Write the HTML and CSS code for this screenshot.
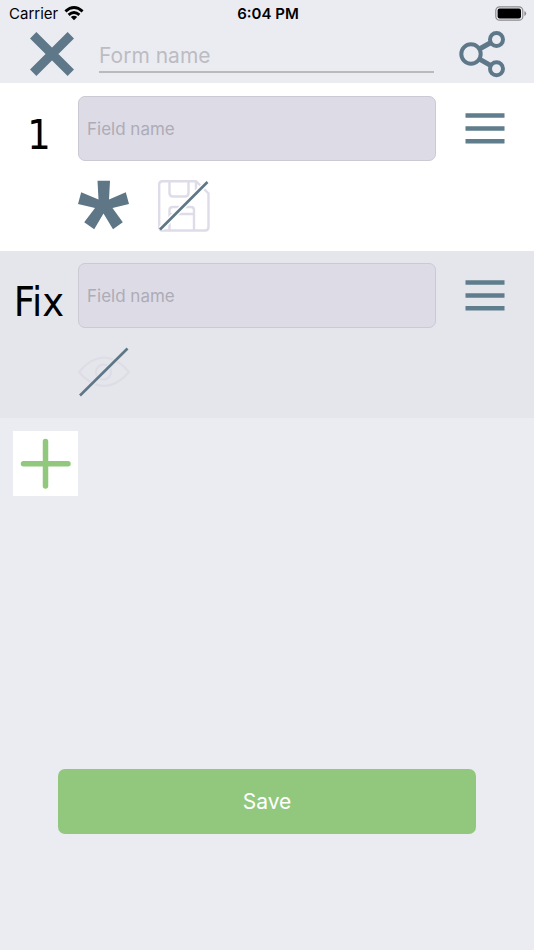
FILE: index.html
```html
<!DOCTYPE html>
<html lang="en">
<head>
<meta charset="utf-8">
<meta name="viewport" content="width=device-width, initial-scale=1">
<title>Form editor</title>
<link rel="stylesheet" href="styles.css">
</head>
<body>
<div class="status">
  <div class="carrier">
    <span>Carrier</span>
    <svg width="20" height="15" viewBox="0 0 20 15" fill="none" stroke="#000" stroke-width="2.8">
      <path d="M1.4 5.4Q10 -2.4 18.6 5.4"/>
      <path d="M4.6 8.9Q10 4 15.4 8.9"/>
      <path d="M10 14.2L6.8 11.1Q10 8.4 13.2 11.1Z" fill="#000" stroke="none"/>
    </svg>
  </div>
  <div class="time">6:04 PM</div>
  <svg class="battery" width="32" height="15" viewBox="0 0 32 15">
    <rect x=".8" y=".8" width="27" height="13.4" rx="3.8" fill="none" stroke="#8b8b8f" stroke-width="1.2"/>
    <rect x="2.6" y="2.6" width="23.4" height="9.8" rx="2" fill="#000"/>
    <path d="M29.4 5Q31.2 5.8 31.2 7.5T29.4 10Z" fill="#8b8b8f"/>
  </svg>
</div>
<header class="header">
  <button class="icon-button close" type="button" aria-label="Close">
    <svg width="44" height="44" viewBox="0 0 44 44" stroke="#5f7889" stroke-width="9"><path d="M3.2 3.2L40.8 40.8M40.8 3.2L3.2 40.8"/></svg>
  </button>
  <input class="form-name" type="text" placeholder="Form name" aria-label="Form name">
  <button class="icon-button share" type="button" aria-label="Share">
    <svg width="48" height="48" viewBox="0 0 48 48" fill="none" stroke="#5f7889" stroke-width="4">
      <path d="M21 19.2L32.5 12.8M21 28.8L32.5 35.4" stroke-width="5"/>
      <circle cx="13" cy="24" r="9.7"/><circle cx="38.5" cy="9.5" r="6.5"/><circle cx="38.5" cy="38.8" r="6.5"/>
    </svg>
  </button>
</header>
<main class="main">
  <section class="field">
    <label class="tag" for="field-1">1</label>
    <input class="field-name" id="field-1" type="text" placeholder="Field name">
    <button class="icon-button menu" type="button" aria-label="Reorder field 1">
      <svg width="40" height="32" viewBox="0 0 40 32" stroke="#5f7d8c" stroke-width="4.4"><path d="M.5 2.5H39.5M.5 15.5H39.5M.5 28.3H39.5"/></svg>
    </button>
    <div class="tools">
      <button class="icon-button" type="button" aria-label="Required">
        <svg width="52" height="52" viewBox="0 0 52 52" fill="#5f7687"><path d="M19.5 .8H32L31 19.5L47.8 12.3L51 24L34.5 28L44.8 42.2L35 49.3L25.500 33.5L16.2 49.3L6.2 42.2L17 28L0 24L3.2 12.3L20.500 19.5Z"/></svg>
      </button>
      <button class="icon-button" type="button" aria-label="Do not save value">
        <svg width="52" height="52" viewBox="0 0 52 52" fill="none" stroke="#dedce8" stroke-width="2.4">
          <path d="M4.5 1.2H38L50.5 13.5V47Q50.5 50.5 47 50.5H4.5Q1.2 50.5 1.2 47V4.5Q1.2 1.2 4.5 1.2Z"/>
          <path d="M11.5 1.5V13Q11.5 16.500 15 16.5H27Q30.5 16.5 30.5 13V1.5M38 1.5V14"/>
          <path d="M11.5 50V30Q11.5 27 15 27H33Q36 27 36 30V50M11.5 37Q11.5 34 15 34H36"/>
          <path d="M3 48.500L48.500 3" stroke="#fff" stroke-width="6"/>
          <path d="M2 49.5L49.5 2" stroke="#5f7687" stroke-width="2.6"/>
        </svg>
      </button>
    </div>
  </section>
  <section class="field fixed">
    <label class="tag" for="field-2">Fix</label>
    <input class="field-name" id="field-2" type="text" placeholder="Field name">
    <button class="icon-button menu" type="button" aria-label="Reorder fixed field">
      <svg width="40" height="32" viewBox="0 0 40 32" stroke="#5f7d8c" stroke-width="4.4"><path d="M.5 2.5H39.5M.5 15.5H39.5M.5 28.3H39.5"/></svg>
    </button>
    <div class="tools">
      <button class="icon-button" type="button" aria-label="Hidden">
        <svg width="52" height="52" viewBox="0 0 52 52" fill="none" stroke="#dedce6" stroke-width="2.2">
          <path d="M1 25Q13 10.5 26 10.5T51 25Q39 39 26 39T1 25Z"/>
          <circle cx="25.5" cy="25" r="7.5"/>
          <path d="M2 49L50 1" stroke="#e5e6ec" stroke-width="5"/>
          <path d="M2 48.5L49.5 1.5" stroke="#5f7687" stroke-width="2.6"/>
        </svg>
      </button>
    </div>
  </section>
  <button class="add" type="button" aria-label="Add field">
    <svg width="52" height="52" viewBox="0 0 52 52" stroke="#92c87d" stroke-width="5.5" stroke-linecap="round"><path d="M25.5 3.5V48M3.5 25.7H48"/></svg>
  </button>
  <button class="save" type="button">Save</button>
</main>
</body>
</html>
```
FILE: styles.css
```css
* {
  box-sizing: border-box;
}

body {
  margin: 0;
  min-height: 100vh;
  display: flex;
  flex-direction: column;
  background: #ebecf2;
  color: #000;
  font-family: Inter, "Liberation Sans", sans-serif;
}

svg {
  display: block;
}

button,
input {
  margin: 0;
  padding: 0;
  border: 0;
  border-radius: 0;
  font-family: inherit;
}

.icon-button {
  background: none;
}

.status {
  display: grid;
  grid-template-columns: 1fr auto 1fr;
  align-items: center;
  height: 27px;
  padding: 0 7px 0 9px;
  font-size: 15px;
}

.carrier {
  display: flex;
  align-items: center;
  gap: 6px;
}

.time {
  font-weight: 600;
}

.battery {
  justify-self: end;
}

.header {
  display: flex;
  align-items: center;
  height: 56px;
  padding: 0 28px 2px 30px;
}

.form-name {
  flex: 1;
  min-width: 0;
  height: 34px;
  margin: 4px 24px 0 25px;
  border-bottom: 2px solid #b7bcb9;
  background: transparent;
  font-size: 21px;
}

.form-name::placeholder {
  color: #bcbcc2;
  opacity: 1;
}

.main {
  flex: 1;
  display: flex;
  flex-direction: column;
}

.field {
  display: grid;
  grid-template-columns: 78px 1fr 98px;
  row-gap: 19px;
  align-items: center;
  padding: 13px 0 19px;
  background: #fff;
}

.fixed {
  padding: 12px 0 19px;
  background: #e5e6ec;
}

.tag {
  padding: 12px 0 0;
  font-family: "DejaVu Sans Condensed", "DejaVu Sans", sans-serif;
  font-size: 41px;
  line-height: 48px;
  text-align: center;
}

.field-name {
  width: 100%;
  min-width: 0;
  height: 65px;
  padding: 0 8px;
  border: 1px solid #cbc9d3;
  border-radius: 7px;
  background: #dddbe6;
  font-size: 17px;
}

.field-name::placeholder {
  color: #adacb6;
  opacity: 1;
}

.menu {
  justify-self: center;
}

.tools {
  grid-column: 2;
  display: flex;
  gap: 28px;
}

.add {
  display: grid;
  place-items: center;
  width: 65px;
  height: 65px;
  margin: 13px;
  background: #fff;
}

.save {
  height: 65px;
  margin: auto 58px 116px;
  border-radius: 7px;
  background: #92c87d;
  color: #fff;
  font-size: 21px;
}
```
